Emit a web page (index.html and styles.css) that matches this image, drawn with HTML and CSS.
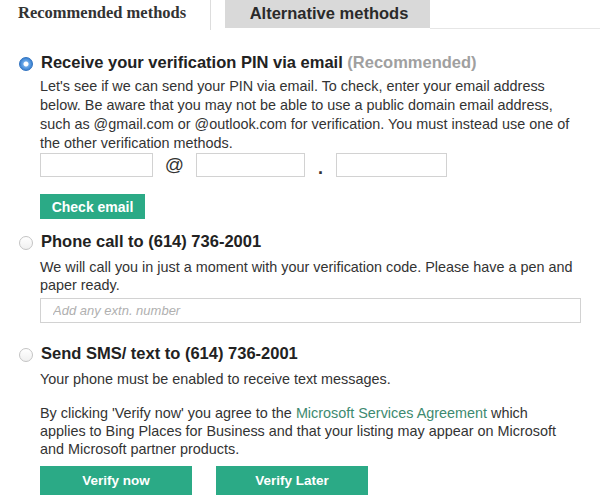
FILE: index.html
```html
<!DOCTYPE html>
<html>
<head>
<meta charset="utf-8">
<link rel="stylesheet" href="styles.css">
</head>
<body>
<div class="tabs">
  <div class="tab tab-active">Recommended methods</div>
  <div class="tab-wrap"><div class="tab tab-alt">Alternative methods</div></div>
  <div class="tab-fill"></div>
</div>

<div class="option option-email">
  <div class="option-head">
    <span class="radio radio-on"></span>
    <span class="option-title">Receive your verification PIN via email <span class="muted">(Recommended)</span></span>
  </div>
  <div class="option-body">
    <p class="desc desc-email">Let's see if we can send your PIN via email. To check, enter your email address below. Be aware that you may not be able to use a public domain email address, such as @gmail.com or @outlook.com for verification. You must instead use one of the other verification methods.</p>
    <div class="email-row">
      <input class="field field-user" type="text">
      <span class="sep sep-at">@</span>
      <input class="field field-domain" type="text">
      <span class="sep sep-dot">.</span>
      <input class="field field-tld" type="text">
    </div>
    <button class="btn btn-check">Check email</button>
  </div>
</div>

<div class="option option-phone">
  <div class="option-head">
    <span class="radio"></span>
    <span class="option-title">Phone call to (614) 736-2001</span>
  </div>
  <div class="option-body">
    <p class="desc">We will call you in just a moment with your verification code. Please have a pen and paper ready.</p>
    <input class="field field-extn" type="text" placeholder="Add any extn. number">
  </div>
</div>

<div class="option option-sms">
  <div class="option-head">
    <span class="radio"></span>
    <span class="option-title">Send SMS/ text to (614) 736-2001</span>
  </div>
  <div class="option-body">
    <p class="desc">Your phone must be enabled to receive text messages.</p>
    <p class="desc legal">By clicking 'Verify now' you agree to the <a class="link" href="#">Microsoft Services Agreement</a> which applies to Bing Places for Business and that your listing may appear on Microsoft and Microsoft partner products.</p>
    <div class="actions">
      <button class="btn btn-verify">Verify now</button>
      <button class="btn btn-verify">Verify Later</button>
    </div>
  </div>
</div>
</body>
</html>
```

FILE: styles.css
```css
html, body {
  margin: 0;
  padding: 0;
  background: #ffffff;
}
body {
  width: 600px;
  height: 500px;
  overflow: hidden;
  font-family: "Liberation Sans", Arial, sans-serif;
  color: #333333;
}

/* tabs */
.tabs {
  display: flex;
  height: 29px;
}
.tab {
  font-weight: bold;
  font-size: 16.5px;
  color: #333333;
  box-sizing: border-box;
}
.tab-active {
  width: 210px;
  padding-left: 18px;
  padding-top: 3px;
  font-family: "Liberation Serif", "Times New Roman", serif;
}
.tab-wrap {
  border-left: 1px solid #dddddd;
  padding-left: 14px;
  height: 30px;
  box-sizing: border-box;
}
.tab-alt {
  width: 205px;
  height: 28px;
  background: #d9d9d9;
  text-align: center;
  padding-top: 4px;
  padding-left: 3px;
  color: #2a2a2a;
}
.tab-fill {
  flex: 1;
  border-bottom: 1px solid #e6e6e6;
  height: 29px;
  box-sizing: border-box;
}

/* options */
.option-head {
  display: flex;
  align-items: center;
  gap: 8px;
  padding-left: 19px;
  height: 20px;
}
.option-email { margin-top: 23px; }
.option-phone { margin-top: 12px; }
.option-sms { margin-top: 20px; }

.radio {
  width: 14px;
  height: 14px;
  border-radius: 50%;
  box-sizing: border-box;
  border: 1px solid #c4c4c4;
  background: linear-gradient(#ffffff, #f0f0f0);
  flex: none;
  margin-top: 3px;
}
.radio-on {
  border: 1px solid #2f72c0;
  background: radial-gradient(circle, #ffffff 0 2px, #6aa8e8 3px, #2f78cc 7px);
}
.option-title {
  font-weight: bold;
  font-size: 16.5px;
  line-height: 20px;
  color: #222222;
  white-space: nowrap;
}
.muted {
  color: #a0a0a0;
}

.option-body {
  padding-left: 40px;
  width: 541px;
}
.desc {
  margin: 7px 0 0;
  max-width: 536px;
  font-size: 14.4px;
  line-height: 18px;
  color: #333333;
}
.desc-email {
  margin-top: 5px;
  line-height: 19px;
}
.legal {
  margin-top: 16px;
}
.link {
  color: #3d8a70;
  text-decoration: none;
}

/* email row */
.email-row {
  display: flex;
  align-items: center;
  height: 24px;
  margin-top: 0;
}
.field {
  box-sizing: border-box;
  border: 1px solid #d2d2d2;
  background: #ffffff;
  height: 24px;
  margin: 0;
  padding: 0;
  outline: none;
  font-family: "Liberation Sans", Arial, sans-serif;
}
.field-user { width: 113px; }
.field-domain { width: 109px; }
.field-tld { width: 111px; }
.sep {
  text-align: center;
  color: #333333;
}
.sep-at {
  width: 43px;
  font-size: 19px;
}
.sep-dot {
  width: 31px;
  font-size: 18px;
  font-weight: bold;
  padding-top: 6px;
}
.field-extn {
  display: block;
  width: 541px;
  height: 25px;
  margin-top: 4px;
  padding-left: 12px;
  font-size: 13px;
}
.field-extn::placeholder {
  color: #b0b0b0;
  font-style: italic;
}

/* buttons */
.btn {
  border: none;
  margin: 0;
  padding: 0;
  background: #2baa86;
  color: #ffffff;
  font-family: "Liberation Sans", Arial, sans-serif;
  font-weight: bold;
  cursor: pointer;
}
.btn-check {
  display: block;
  margin-top: 17px;
  width: 105px;
  height: 25px;
  font-size: 14px;
}
.actions {
  display: flex;
  gap: 24px;
  margin-top: 8px;
}
.btn-verify {
  width: 152px;
  height: 29px;
  font-size: 13.5px;
}
```
